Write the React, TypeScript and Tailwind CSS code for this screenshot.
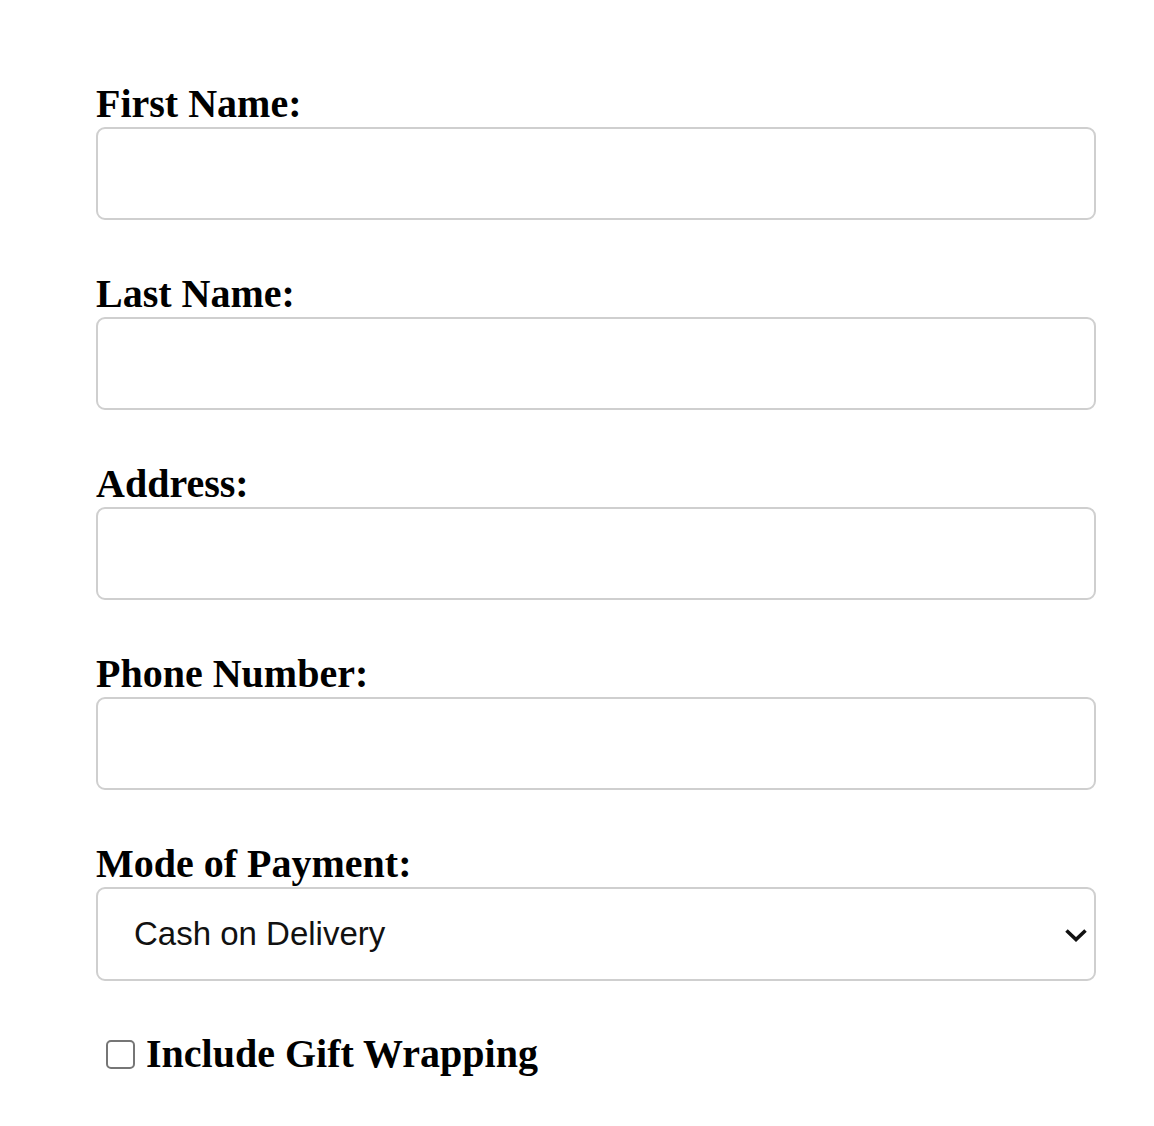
import { useState } from "react";

const fields = [
  { id: "first", label: "First Name:" },
  { id: "last", label: "Last Name:" },
  { id: "address", label: "Address:" },
  { id: "phone", label: "Phone Number:" },
];

export default function App() {
  const [gift, setGift] = useState(false);

  return (
    <div className="min-h-screen bg-white text-black font-['Liberation_Serif',serif]">
      <form className="w-[1000px] ml-[96px] pt-[81px] flex flex-col gap-[51px]">
        {fields.map((f) => (
          <div key={f.id} className="flex flex-col">
            <label
              htmlFor={f.id}
              className="block text-[40px] leading-[46px] font-bold"
            >
              {f.label}
            </label>
            <input
              id={f.id}
              type="text"
              className="h-[93px] w-full rounded-[9px] border-2 border-[#cfcfcf] bg-white px-9 text-[33px] outline-none"
            />
          </div>
        ))}

        {/* Payment */}
        <div className="flex flex-col">
          <label
            htmlFor="payment"
            className="block text-[40px] leading-[46px] font-bold"
          >
            Mode of Payment:
          </label>
          <div className="relative">
            <select
              id="payment"
              defaultValue="cod"
              className="h-[94px] w-full appearance-none rounded-[9px] border-2 border-[#cfcfcf] bg-white pl-[36px] text-[33px] text-[#111] font-['Liberation_Sans',sans-serif] outline-none"
            >
              <option value="cod">Cash on Delivery</option>
              <option value="card">Credit Card</option>
            </select>
            <svg
              width="24"
              height="16"
              viewBox="0 0 24 16"
              fill="none"
              stroke="#111"
              strokeWidth="3.6"
              className="pointer-events-none absolute right-[8px] top-[40px]"
            >
              <path d="M2.5 3.5 12 12.5 21.5 3.5" />
            </svg>
          </div>
        </div>

        {/* Gift wrapping */}
        <label className="flex items-center -mt-[1px] text-[40px] leading-[46px] font-bold">
          <input
            type="checkbox"
            checked={gift}
            onChange={(e) => setGift(e.target.checked)}
            className="ml-[10px] mr-[11px] h-[29px] w-[29px] shrink-0 appearance-none rounded-[5px] border-2 border-[#767676] bg-white checked:bg-[#0075ff]"
          />
          Include Gift Wrapping
        </label>
      </form>
    </div>
  );
}
